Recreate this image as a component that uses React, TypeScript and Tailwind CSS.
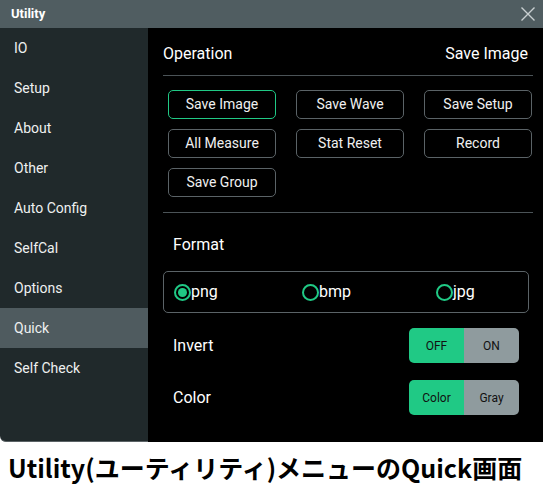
import React, { useState } from 'react';

const menu = ['IO', 'Setup', 'About', 'Other', 'Auto Config', 'SelfCal', 'Options', 'Quick', 'Self Check'];
const ops = ['Save Image', 'Save Wave', 'Save Setup', 'All Measure', 'Stat Reset', 'Record', 'Save Group'];
const formats = [
  { name: 'png', w: 'w-[128px]' },
  { name: 'bmp', w: 'w-[134px]' },
  { name: 'jpg', w: 'w-auto' },
];

const Toggle: React.FC<{ left: string; right: string; value: number; onChange: (v: number) => void }> = ({ left, right, value, onChange }) => (
  <div className="flex w-[110px] h-[35px] rounded-[5px] overflow-hidden text-[12px] text-[#111]">
    <button onClick={() => onChange(0)} className={`flex-1 flex items-center justify-center ${value === 0 ? 'bg-[#20c985]' : 'bg-[#8f9b9e]'}`}>
      {left}
    </button>
    <button onClick={() => onChange(1)} className={`flex-1 flex items-center justify-center ${value === 1 ? 'bg-[#20c985]' : 'bg-[#8f9b9e]'}`}>
      {right}
    </button>
  </div>
);

export default function App() {
  const [active, setActive] = useState('Quick');
  const [op, setOp] = useState('Save Image');
  const [format, setFormat] = useState('png');
  const [invert, setInvert] = useState(0);
  const [color, setColor] = useState(0);

  return (
    <div className="w-[543px] h-[501px] bg-white font-['Roboto',sans-serif]">
      {/* Window */}
      <div className="h-[442px] flex flex-col">
        {/* Title bar */}
        <div className="h-[28px] bg-[#505d61] flex items-center justify-between pl-[11px] pr-[7px] shrink-0">
          <span className="text-white font-bold text-[13px]">Utility</span>
          <svg width="16" height="16" viewBox="0 0 16 16" className="text-[#c9cfd0]">
            <path d="M1.5 1.5 L14.5 14.5 M14.5 1.5 L1.5 14.5" stroke="currentColor" strokeWidth="1.4" fill="none" />
          </svg>
        </div>

        <div className="flex flex-1 min-h-0">
          {/* Sidebar */}
          <div className="w-[148px] bg-[#20292b] rounded-bl-[6px] border-b border-[#5a6265] flex flex-col">
            {menu.map(m => (
              <button
                key={m}
                onClick={() => setActive(m)}
                className={`h-[40px] text-left pl-[14px] pt-[1px] text-[14px] text-[#eef0f0] ${active === m ? 'bg-[#4f5b5f]' : ''}`}
              >
                {m}
              </button>
            ))}
          </div>

          {/* Main */}
          <div className="flex-1 bg-black pl-[15px] pr-[10px] text-white">
            <div className="flex justify-between items-center h-[48px] pt-[5px] pr-[5px] border-b border-[#4b5357] text-[16px]">
              <span>Operation</span>
              <span>{op}</span>
            </div>

            <div className="grid grid-cols-[108px_108px_108px] gap-x-[20px] gap-y-[10px] pl-[5px] pt-[14px] pb-[15px] border-b border-[#4b5357]">
              {ops.map(o => (
                <button
                  key={o}
                  onClick={() => setOp(o)}
                  className={`h-[29px] rounded-[5px] border text-[14px] text-[#f0f0f0] ${op === o ? 'border-[#20c985]' : 'border-[#5b6367]'}`}
                >
                  {o}
                </button>
              ))}
            </div>

            <div className="pl-[10px] pt-[22px] text-[16px] leading-[20px]">Format</div>

            <div className="mt-[16px] h-[42px] w-[366px] rounded-[5px] border border-[#5b6367] flex items-center pl-[10px]">
              {formats.map(f => (
                <button key={f.name} onClick={() => setFormat(f.name)} className={`flex items-center ${f.w} text-[16px]`}>
                  <span className="w-[17px] h-[17px] rounded-full border-2 border-[#20c985] flex items-center justify-center">
                    {format === f.name && <span className="w-[9px] h-[9px] rounded-full bg-[#20c985]" />}
                  </span>
                  <span className="-mt-[1px]">{f.name}</span>
                </button>
              ))}
            </div>

            <div className="flex items-center justify-between pl-[10px] pr-[14px] mt-[15px] h-[35px]">
              <span className="text-[16px]">Invert</span>
              <Toggle left="OFF" right="ON" value={invert} onChange={setInvert} />
            </div>
            <div className="flex items-center justify-between pl-[10px] pr-[14px] mt-[17px] h-[35px]">
              <span className="text-[16px]">Color</span>
              <Toggle left="Color" right="Gray" value={color} onChange={setColor} />
            </div>
          </div>
        </div>
      </div>

      {/* Caption */}
      <div className="pl-[8px] pt-[9px] text-[25px] font-bold leading-[32px] text-black font-['Noto_Sans_CJK_JP','Noto_Sans',sans-serif]">
        Utility(ユーティリティ)メニューのQuick画面
      </div>
    </div>
  );
}
